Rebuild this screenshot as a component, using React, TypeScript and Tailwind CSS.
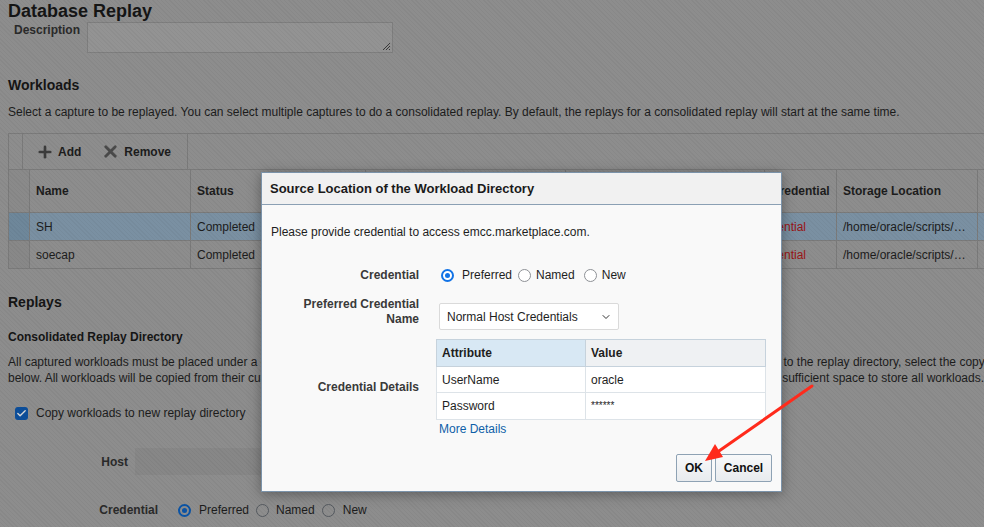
import React from 'react';
import { Check, ChevronDown, Plus, X } from 'lucide-react';

interface Workload {
  name: string;
  status: string;
  selected?: boolean;
}

const workloads: Workload[] = [
  { name: 'SH', status: 'Completed', selected: true },
  { name: 'soecap', status: 'Completed' },
];

const cols = [21, 161, 175, 200, 199, 72, 141, 60];

function Radio({ checked, dim, className = '' }: { checked?: boolean; dim?: boolean; className?: string }) {
  if (checked) {
    return (
      <span
        className={
          (dim
            ? 'flex h-[13px] w-[13px] shrink-0 items-center justify-center rounded-full border-2 border-[#0b54a6] '
            : 'flex h-[13px] w-[13px] shrink-0 items-center justify-center rounded-full border-2 border-[#1273e6] bg-white ') + className
        }
      >
        <span className={dim ? 'h-[5px] w-[5px] rounded-full bg-[#0b54a6]' : 'h-[5px] w-[5px] rounded-full bg-[#1273e6]'} />
      </span>
    );
  }
  return (
    <span
      className={
        (dim
          ? 'block h-[13px] w-[13px] shrink-0 rounded-full border-[1.5px] border-[#555a60] '
          : 'block h-[13px] w-[13px] shrink-0 rounded-full border-[1.5px] border-[#8e9196] bg-white ') + className
      }
    />
  );
}

function Page() {
  return (
    <div className="px-2 text-[#1c1c1c]">
      <h1 className="text-[18px] font-bold leading-[22px] text-[#151515]">Database Replay</h1>
      <div className="flex h-[32px]">
        <div className="w-[79px] pl-[6px] text-xs font-bold leading-4 text-[#2a2a2a]">Description</div>
        <div className="relative h-[31px] w-[306px] border border-[#7e7e7e] bg-[#939393]">
          <svg className="absolute bottom-[1px] right-[1px]" width="10" height="10" viewBox="0 0 10 10">
            <path d="M9 2 L2 9 M9 5 L5 9 M9 8 L8 9" stroke="#3a3a3a" strokeWidth="1" />
          </svg>
        </div>
      </div>

      <h2 className="mt-[22px] text-[14px] font-bold leading-[18px] text-[#151515]">Workloads</h2>
      <p className="mt-[9px] text-xs leading-[18px] whitespace-nowrap">
        Select a capture to be replayed. You can select multiple captures to do a consolidated replay. By default, the replays for a consolidated replay will start at the same time.
      </p>

      <div className="mt-[12px] w-[1040px]">
        <div className="flex h-[36px] border-t border-l border-[#7a7a7a]">
          <div className="w-[14px] border-r border-[#7a7a7a]" />
          <div className="flex w-[165px] items-center border-r border-[#7a7a7a] pl-[13px] text-xs font-bold">
            <Plus size={18} strokeWidth={3.5} className="text-[#3c3c3c]" />
            <span className="ml-[4px]">Add</span>
            <X size={19} strokeWidth={3.5} className="ml-[20px] text-[#4a4a4a]" />
            <span className="ml-[4px]">Remove</span>
          </div>
        </div>
        <table className="w-[1029px] table-fixed border-collapse text-xs">
          <colgroup>
            {cols.map((w, i) => (
              <col key={i} style={{ width: w }} />
            ))}
          </colgroup>
          <thead>
            <tr className="h-[43px] font-bold">
              <th className="border border-[#7a7a7a] bg-[#8a8a8a]" />
              <th className="border border-[#7a7a7a] px-[6px] text-left">Name</th>
              <th className="border border-[#7a7a7a] px-[6px] text-left">Status</th>
              <th className="border border-[#7a7a7a] px-[6px] text-left">Capture Time</th>
              <th className="border border-[#7a7a7a] px-[6px] text-left">Host</th>
              <th className="border border-[#7a7a7a] px-[6px] text-left whitespace-nowrap">Credential</th>
              <th className="border border-[#7a7a7a] px-[6px] text-left">Storage Location</th>
              <th className="border border-[#7a7a7a] px-[6px] text-left">Capture</th>
            </tr>
          </thead>
          <tbody>
            {workloads.map((w) => (
              <tr key={w.name} className={w.selected ? 'h-[28px] bg-[#7a90a2]' : 'h-[28px]'}>
                <td className={w.selected ? 'border border-[#7a7a7a] bg-[#6e879a]' : 'border border-[#7a7a7a] bg-[#888888]'} />
                <td className="border border-[#7a7a7a] px-[6px]">{w.name}</td>
                <td className="border border-[#7a7a7a] px-[6px]">{w.status}</td>
                <td className="border border-[#7a7a7a] px-[6px]" />
                <td className="border border-[#7a7a7a] px-[6px]" />
                <td className="border border-[#7a7a7a] text-[#9a1515]">
                  <div className="flex justify-end overflow-hidden pr-[30px] whitespace-nowrap">
                    <span className="shrink-0">No Credential</span>
                  </div>
                </td>
                <td className="border border-[#7a7a7a] px-[6px] whitespace-nowrap">/home/oracle/scripts/…</td>
                <td className="border border-[#7a7a7a]" />
              </tr>
            ))}
          </tbody>
        </table>
      </div>

      <h2 className="mt-[24px] text-[14px] font-bold leading-[18px] text-[#151515]">Replays</h2>
      <h3 className="mt-[17px] text-xs font-bold leading-[18px] text-[#151515]">Consolidated Replay Directory</h3>
      <div className="mt-[8px] text-xs leading-4 whitespace-nowrap">
        <p>
          All captured workloads must be placed under a common consolidated directory. If the captured workloads are stored in other locations, copy them to the replay directory, select the copy option
        </p>
        <p>
          below. All workloads will be copied from their current storage locations, into the consolidated replay directory. Confirm that the target directory has sufficient space to store all workloads.
        </p>
      </div>

      <label className="mt-[17px] flex h-[20px] items-center pl-[7px] text-xs">
        <span className="flex h-[13px] w-[13px] items-center justify-center rounded-[3px] bg-[#0c4e9a]">
          <Check size={11} strokeWidth={3} className="text-[#d9d9d9]" />
        </span>
        <span className="ml-[8px]">Copy workloads to new replay directory</span>
      </label>

      <div className="mt-[25px] flex h-[27px] items-center">
        <div className="w-[120px] text-right text-xs font-bold text-[#2a2a2a]">Host</div>
        <div className="ml-[7px] h-[27px] w-[400px] bg-[#878787]" />
      </div>

      <div className="mt-[25px] flex h-[20px] items-center text-xs">
        <div className="w-[150px] text-right font-bold text-[#2a2a2a]">Credential</div>
        <div className="ml-[20px] flex items-center">
          <Radio checked dim />
          <span className="ml-[8px]">Preferred</span>
          <Radio dim className="ml-[7px]" />
          <span className="ml-[7px]">Named</span>
          <Radio dim className="ml-[7px]" />
          <span className="ml-[8px]">New</span>
        </div>
      </div>
    </div>
  );
}

function Dialog() {
  return (
    <div className="absolute left-[261px] top-[172px] flex h-[320px] w-[521px] flex-col border border-[#7b93aa] bg-[#f9f9f9] text-[#1e1e1e] shadow-[0_2px_12px_rgba(0,0,0,0.35)]">
      <div className="h-[32px] border-b border-[#8ba0b4] bg-[#f1f1f1] pl-[8px] text-[13px] font-bold leading-[31px] text-[#1a1a1a]">
        Source Location of the Workload Directory
      </div>
      <p className="mt-[19px] pl-[9px] text-xs leading-4">Please provide credential to access emcc.marketplace.com.</p>

      <div className="mt-[25px] flex h-[20px] items-center text-xs">
        <div className="w-[157px] text-right font-bold text-[#3a3a3a]">Credential</div>
        <div className="ml-[22px] flex items-center">
          <Radio checked />
          <span className="ml-[8px]">Preferred</span>
          <Radio className="ml-[6px]" />
          <span className="ml-[5px]">Named</span>
          <Radio className="ml-[9px]" />
          <span className="ml-[5px]">New</span>
        </div>
      </div>

      <div className="mt-[12px] flex text-xs">
        <div className="w-[157px] text-right font-bold leading-[15px] text-[#3a3a3a]">
          Preferred Credential
          <br />
          Name
        </div>
        <div className="ml-[20px] mt-[6px] flex h-[27px] w-[180px] items-center justify-between rounded-[2px] border border-[#dadada] bg-white pl-[7px] pr-[6px]">
          <span>Normal Host Credentials</span>
          <ChevronDown size={12} strokeWidth={2} className="text-[#333]" />
        </div>
      </div>

      <div className="mt-[9px] flex text-xs">
        <div className="w-[157px] pt-[40px] text-right font-bold leading-4 text-[#3a3a3a]">Credential Details</div>
        <div className="ml-[17px]">
          <table className="w-[330px] table-fixed border-collapse border border-[#c6d2dc]">
            <colgroup>
              <col className="w-[149px]" />
              <col />
            </colgroup>
            <thead>
              <tr className="h-[27px] font-bold">
                <th className="border border-[#c6d2dc] bg-[#d8e8f4] px-[5px] text-left">Attribute</th>
                <th className="border border-[#c6d2dc] bg-[#eff1f3] px-[5px] text-left">Value</th>
              </tr>
            </thead>
            <tbody className="bg-white">
              <tr className="h-[26px]">
                <td className="border border-[#dde3e8] px-[5px]">UserName</td>
                <td className="border border-[#dde3e8] px-[5px]">oracle</td>
              </tr>
              <tr className="h-[27px]">
                <td className="border border-[#dde3e8] px-[5px]">Password</td>
                <td className="border border-[#dde3e8] px-[5px] text-[10px]">******</td>
              </tr>
            </tbody>
          </table>
          <div className="ml-[3px] mt-[1px] leading-4 text-[#0e5fa8]">More Details</div>
        </div>
      </div>

      <div className="mt-[17px] flex justify-end gap-[3px] pr-[9px] text-xs font-bold">
        <button className="h-[28px] w-[36px] rounded-[2px] border border-[#8ea2b4] bg-gradient-to-b from-[#f8f9fa] to-[#e8ebee] text-[#111]">OK</button>
        <button className="h-[28px] w-[57px] rounded-[2px] border border-[#8ea2b4] bg-gradient-to-b from-[#f8f9fa] to-[#e8ebee] text-[#111]">Cancel</button>
      </div>
    </div>
  );
}

export default function App() {
  return (
    <div className="relative h-[527px] w-[984px] overflow-hidden bg-[#8d8d8d] font-['Liberation_Sans',Arial,sans-serif]">
      <Page />
      <div className="absolute inset-0 bg-[repeating-linear-gradient(45deg,rgba(0,0,0,0.035)_0px,rgba(0,0,0,0.035)_1px,transparent_1px,transparent_3px)]" />
      <Dialog />
      <svg className="pointer-events-none absolute inset-0" width="984" height="527">
        <line x1="812" y1="386" x2="719" y2="451" stroke="#ff2b1c" strokeWidth="3" strokeLinecap="round" />
        <polygon points="705,461 723,457 715,444" fill="#ff2b1c" />
      </svg>
    </div>
  );
}
